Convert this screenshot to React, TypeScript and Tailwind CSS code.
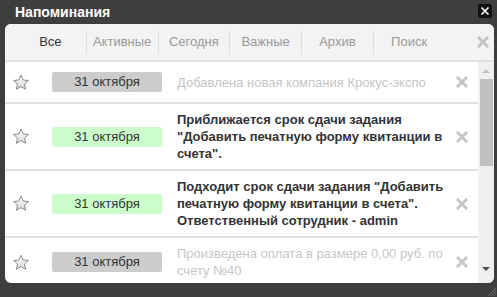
import React from "react";

type Reminder = {
  id: number;
  text: string;
  unread: boolean;
};

const reminders: Reminder[] = [
  { id: 1, text: "Добавлена новая компания Крокус-экспо", unread: false },
  {
    id: 2,
    text: 'Приближается срок сдачи задания "Добавить печатную форму квитанции в счета".',
    unread: true,
  },
  {
    id: 3,
    text: 'Подходит срок сдачи задания "Добавить печатную форму квитанции в счета". Ответственный сотрудник - admin',
    unread: true,
  },
  { id: 4, text: "Произведена оплата в размере 0,00 руб. по счету №40", unread: false },
];

const tabs = ["Все", "Активные", "Сегодня", "Важные", "Архив", "Поиск"];

function Star() {
  return (
    <svg width="18" height="17" viewBox="0 0 18 17" className="shrink-0">
      <defs>
        <linearGradient id="starFill" x1="0" y1="0" x2="0" y2="1">
          <stop offset="0" stopColor="#ffffff" />
          <stop offset="1" stopColor="#d6d6d6" />
        </linearGradient>
      </defs>
      <path
        d="M9 1.2 L11.2 6 L16.4 6.5 L12.5 10 L13.6 15.3 L9 12.6 L4.4 15.3 L5.5 10 L1.6 6.5 L6.8 6 Z"
        fill="url(#starFill)"
        stroke="#8a8a8a"
        strokeWidth="1"
        strokeLinejoin="round"
      />
    </svg>
  );
}

function Cross({ color = "#c6c6c6" }: { color?: string }) {
  return (
    <svg width="12" height="12" viewBox="0 0 12 12" className="shrink-0">
      <path d="M2 2 L10 10 M10 2 L2 10" stroke={color} strokeWidth="3" strokeLinecap="square" />
    </svg>
  );
}

export default function App() {
  return (
    <div
      className="relative w-[497px] h-[297px] bg-[#3e3e3e] overflow-hidden flex flex-col"
      style={{ fontFamily: '"Liberation Sans", Arial, sans-serif' }}
    >
      {/* Title bar */}
      <div className="h-[24px] flex items-center justify-between pl-[15px] pr-[5px] shrink-0">
        <span className="text-white font-bold text-[14px] leading-none">Напоминания</span>
        <div className="w-[14px] h-[14px] bg-[#121212] rounded-[2px] flex items-center justify-center -mt-[2px]">
          <svg width="10" height="10" viewBox="0 0 10 10">
            <path d="M1.5 1.5 L8.5 8.5 M8.5 1.5 L1.5 8.5" stroke="#ffffff" strokeWidth="1.6" />
          </svg>
        </div>
      </div>

      {/* Panel */}
      <div className="ml-[5px] mr-[3px] h-[259px] bg-white rounded-[6px] overflow-hidden flex flex-col shrink-0">
        {/* Tabs */}
        <div className="h-[38px] shrink-0 bg-[#f3f3f3] border-b-2 border-[#e2e2e2] flex items-center pl-[10px] pr-[5px]">
          {tabs.map((t, i) => (
            <React.Fragment key={t}>
              {i > 0 && <div className="w-px h-[23px] bg-[#dcdcdc]" />}
              <div
                className={`w-[70.75px] text-center text-[13px] ${
                  i === 0 ? "text-[#333333]" : "text-[#9a9a9a]"
                }`}
              >
                {t}
              </div>
            </React.Fragment>
          ))}
          <div className="ml-auto">
            <Cross color="#c3c3c3" />
          </div>
        </div>

        {/* Body */}
        <div className="flex flex-1 overflow-hidden">
          <div className="flex-1 overflow-hidden">
            {reminders.map((r) => (
              <div
                key={r.id}
                className="flex items-center min-h-[42px] py-[7px] pl-[7px] pr-[10px] border-b-2 border-[#e0e0e0]"
              >
                <Star />
                <div
                  className={`ml-[22px] w-[110px] h-[20px] shrink-0 rounded-[2px] flex items-center justify-center text-[13px] text-[#333333] ${
                    r.unread ? "bg-[#ccfccc]" : "bg-[#cccccc]"
                  }`}
                >
                  31 октября
                </div>
                <div
                  className={`ml-[15px] w-[272px] text-[13px] leading-[17px] ${
                    r.unread ? "font-bold text-[#333333]" : "text-[#c6c6c6]"
                  }`}
                >
                  {r.text}
                </div>
                <div className="ml-auto">
                  <Cross />
                </div>
              </div>
            ))}
          </div>

          {/* Scrollbar */}
          <div className="w-[16px] bg-[#f0f0f0] flex flex-col items-center shrink-0">
            <div className="h-[17px] flex items-center justify-center">
              <div className="w-0 h-0 border-l-[4px] border-r-[4px] border-b-[4px] border-l-transparent border-r-transparent border-b-[#c2c2c2]" />
            </div>
            <div className="w-[13px] h-[87px] bg-[#c1c1c1]" />
            <div className="flex-1" />
            <div className="h-[16px] flex items-start justify-center">
              <div className="w-0 h-0 border-l-[4px] border-r-[4px] border-t-[4px] border-l-transparent border-r-transparent border-t-[#505050]" />
            </div>
          </div>
        </div>
      </div>

      {/* Resize grip */}
      <svg className="absolute right-0 bottom-0" width="12" height="12" viewBox="0 0 12 12">
        <path d="M11 3 L3 11 M11 6 L6 11 M11 9 L9 11" stroke="#6a6a6a" strokeWidth="1" />
      </svg>
    </div>
  );
}
